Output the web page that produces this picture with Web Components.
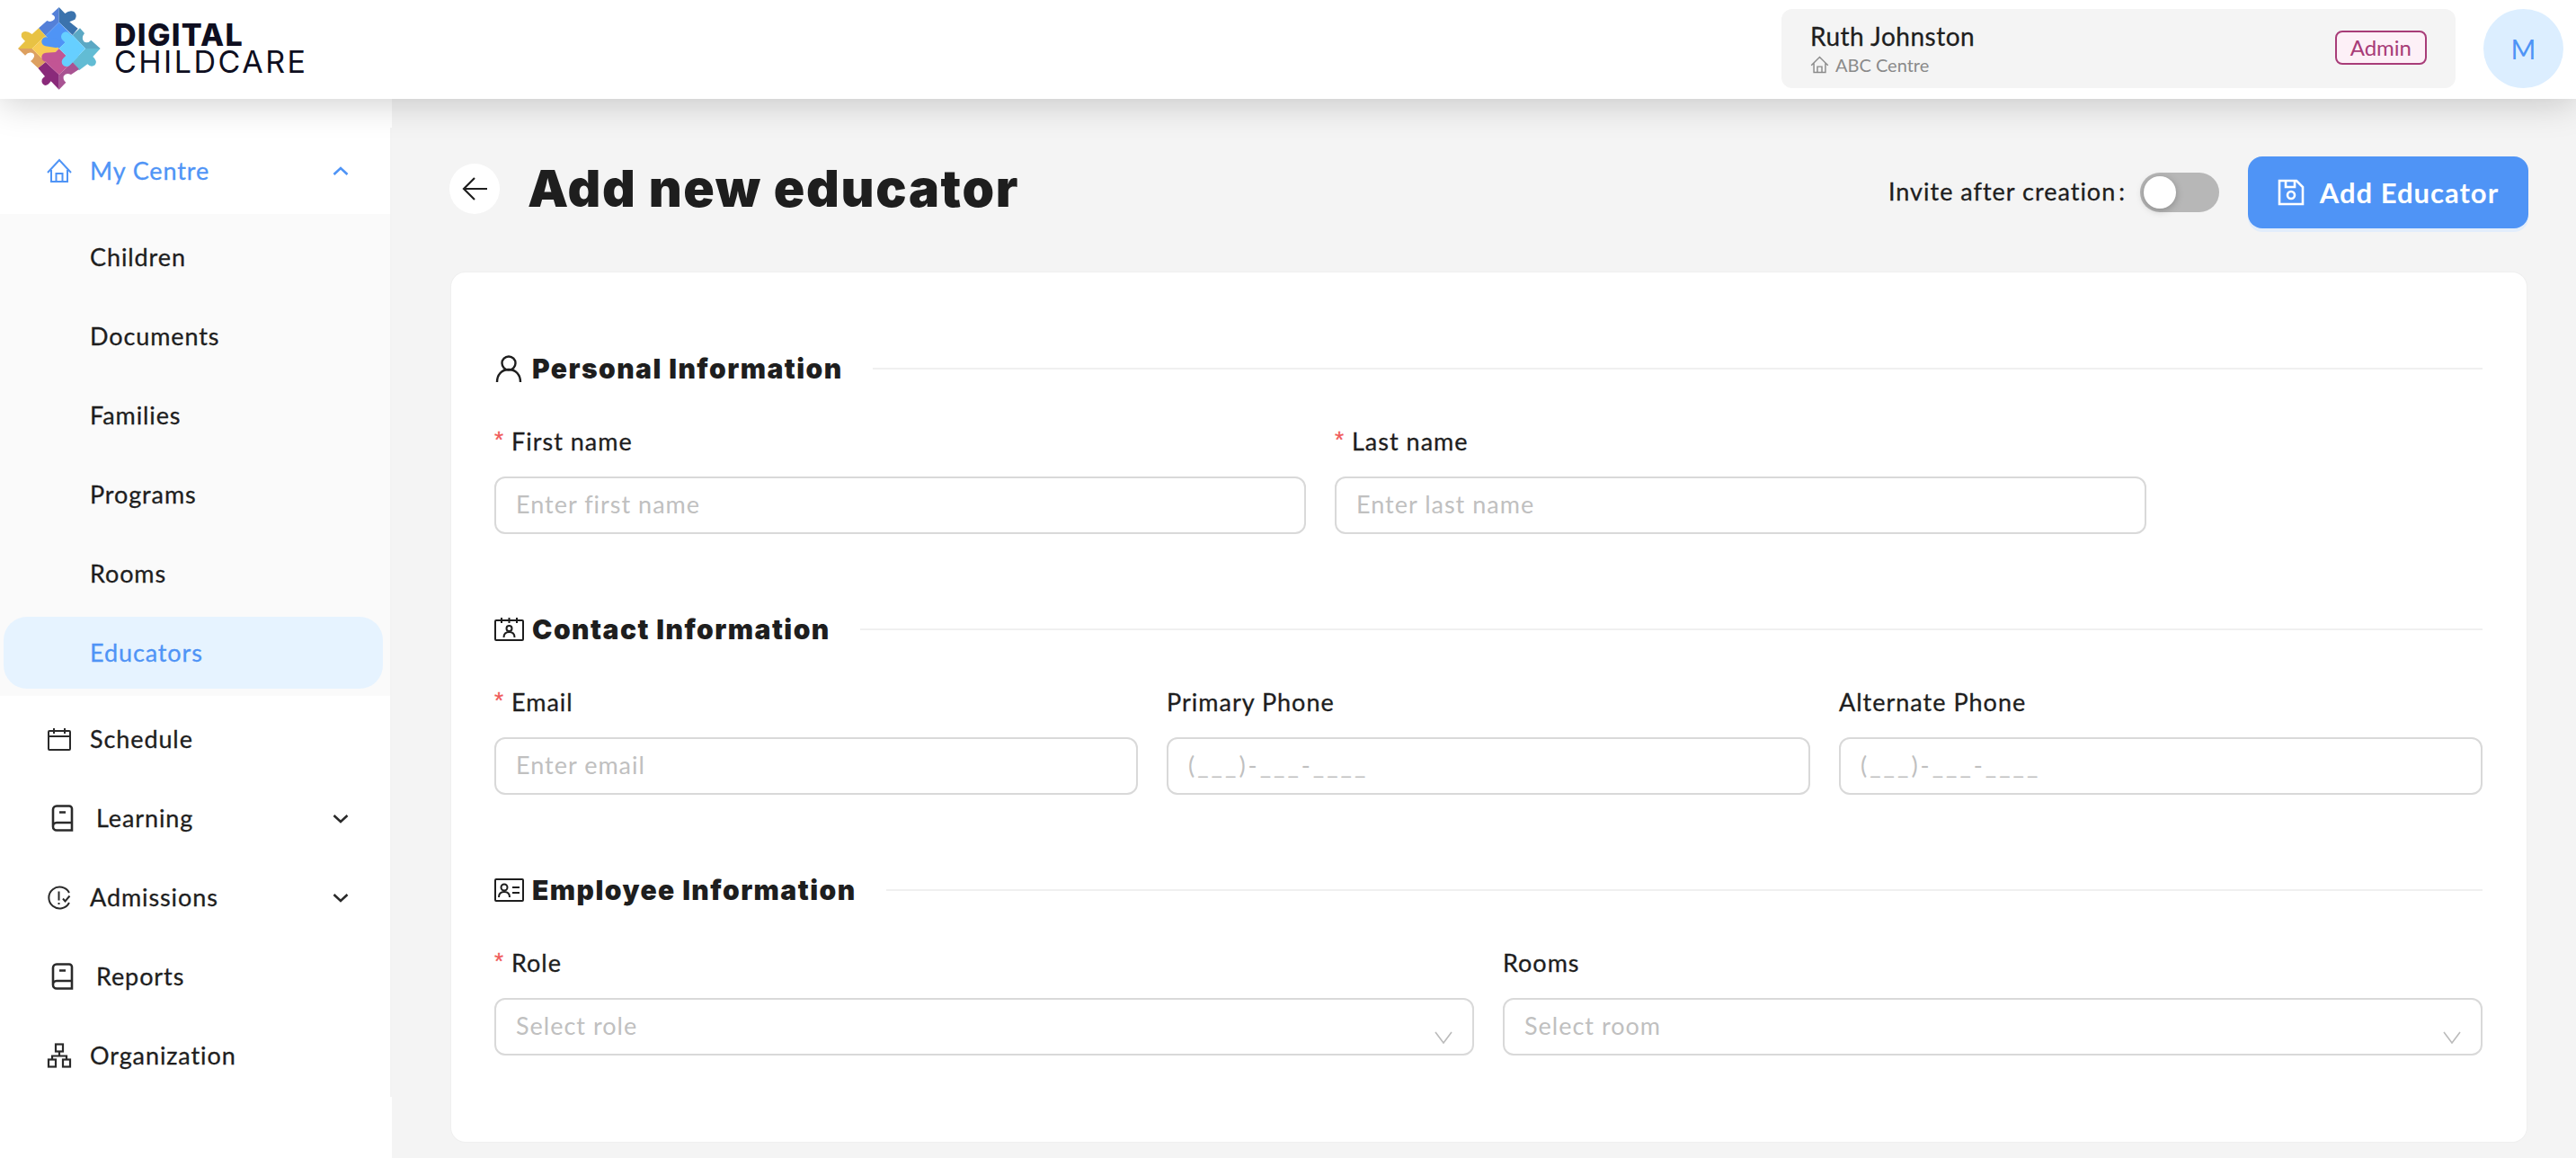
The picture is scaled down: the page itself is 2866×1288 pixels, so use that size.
<!DOCTYPE html>
<html lang="en">
<head>
<meta charset="utf-8">
<title>Add new educator</title>
<style>
    html, body{
        margin: 0;
        padding: 0;
        height: 1288px;
        overflow: hidden;
        background: #f4f4f4;
        color: #1e1e1e;
        font-family: Lato, "Liberation Sans", sans-serif;
    }
    .layout{
        display: flex;
        height: 1178px;
    }
</style>
</head>
<body>
<app-header></app-header>
<div class="layout">
    <side-nav>
        <nav-item label="My Centre" active chevron="up">
            <svg slot="icon" width="28" height="28" viewBox="0 0 28 28" fill="none" stroke="#4f94f6" stroke-width="2"><path d="M1 16 14 2l13 14M5 13v13h18V13M10.500 26v-9h7v9"/></svg>
        </nav-item>
        <nav-group>
            <nav-item label="Children" sub></nav-item>
            <nav-item label="Documents" sub></nav-item>
            <nav-item label="Families" sub></nav-item>
            <nav-item label="Programs" sub></nav-item>
            <nav-item label="Rooms" sub></nav-item>
            <nav-item label="Educators" sub selected></nav-item>
        </nav-group>
        <nav-item label="Schedule">
            <svg slot="icon" width="28" height="28" viewBox="0 0 28 28" fill="none" stroke="#2a2a2a" stroke-width="2"><rect x="2" y="5" width="24" height="21" rx="1"/><path d="M2 11h24M8 2v6M20 2v6"/></svg>
        </nav-item>
        <nav-item label="Learning" chevron="down">
            <svg slot="icon" width="35" height="30" viewBox="0 0 35 30" fill="none" stroke="#2a2a2a" stroke-width="2.600"><path d="M11 1.500h14a3 3 0 0 1 3 3v24H11a4 4 0 0 1-4-4v-19a4 4 0 0 1 4-4zM7 24a4 4 0 0 1 4-4h17M14 8.500h7"/></svg>
        </nav-item>
        <nav-item label="Admissions" chevron="down">
            <svg slot="icon" width="28" height="28" viewBox="0 0 28 28" fill="none" stroke="#2a2a2a" stroke-width="2"><path d="M25 9A12 12 0 1 0 25 20"/><path d="M13.500 7.500v10M13.500 20v2M18 15.500l2.500 3 5-6"/></svg>
        </nav-item>
        <nav-item label="Reports">
            <svg slot="icon" width="35" height="30" viewBox="0 0 35 30" fill="none" stroke="#2a2a2a" stroke-width="2.600"><path d="M11 1.500h14a3 3 0 0 1 3 3v24H11a4 4 0 0 1-4-4v-19a4 4 0 0 1 4-4zM7 24a4 4 0 0 1 4-4h17M14 8.500h7"/></svg>
        </nav-item>
        <nav-item label="Organization">
            <svg slot="icon" width="28" height="28" viewBox="0 0 28 28" fill="none" stroke="#2a2a2a" stroke-width="2.200"><rect x="10" y="1.500" width="8" height="8"/><rect x="2" y="18.500" width="8" height="8"/><rect x="18" y="18.500" width="8" height="8"/><path d="M14 9.500v5M6 18.500v-4h16v4"/></svg>
        </nav-item>
    </side-nav>
    <main-area>
        <page-head></page-head>
        <form-card>
            <form-section title="Personal Information">
                <svg slot="icon" width="33" height="30" viewBox="0 0 33 30" fill="none" stroke="#1e1e1e" stroke-width="2.400"><circle cx="16" cy="9" r="7.500"/><path d="M3 30c0-8 5-14 13-14s13 6 13 14"/></svg>
                <form-field span="10" label="First name" required placeholder="Enter first name"></form-field>
                <form-field span="10" label="Last name" required placeholder="Enter last name"></form-field>
            </form-section>
            <form-section title="Contact Information">
                <svg slot="icon" width="33" height="26" viewBox="0 0 33 26" fill="none" stroke="#1e1e1e" stroke-width="2"><rect x="1" y="3" width="31" height="22" rx="1"/><path d="M8 0v6M16.500 0v6M25 0v6"/><circle cx="16.500" cy="12" r="3"/><path d="M10.500 22c0-4 2.500-6 6-6s6 2 6 6"/></svg>
                <form-field span="8" label="Email" required placeholder="Enter email"></form-field>
                <form-field span="8" label="Primary Phone" placeholder="(___)-___-____" spaced></form-field>
                <form-field span="8" label="Alternate Phone" placeholder="(___)-___-____" spaced></form-field>
            </form-section>
            <form-section title="Employee Information">
                <svg slot="icon" width="33" height="26" viewBox="0 0 33 26" fill="none" stroke="#1e1e1e" stroke-width="2"><rect x="1" y="1" width="31" height="24" rx="1"/><circle cx="11" cy="10" r="3.500"/><path d="M5 21c0-4 2.500-6 6-6s6 2 6 6M20 10h8M20 16h8"/></svg>
                <form-field span="12" label="Role" required placeholder="Select role" select></form-field>
                <form-field span="12" label="Rooms" placeholder="Select room" select></form-field>
            </form-section>
        </form-card>
    </main-area>
</div>

<script>
const headerTemplate = document.createElement('template');

headerTemplate.innerHTML = `
    <style>
        :host{
            display: flex;
            justify-content: space-between;
            align-items: center;
            position: relative;
            z-index: 2;
            height: 110px;
            box-sizing: border-box;
            padding: 0 14px 2px 14px;
            background: #fff;
            box-shadow: 0 4px 40px rgba(0,0,0,.2);
        }
        .brand{
            display: flex;
            align-items: center;
            gap: 8px;
        }
        .wordmark{
            color: #0e0e20;
            font-family: Inter, sans-serif;
            line-height: 30px;
        }
        .wordmark b{
            display: block;
            font-size: 34px;
            font-weight: 800;
            letter-spacing: 1.300px;
        }
        .wordmark span{
            display: block;
            font-size: 34px;
            font-weight: 400;
            letter-spacing: 2.500px;
        }
        .right{
            display: flex;
            align-items: center;
            gap: 31px;
        }
        .user{
            display: flex;
            justify-content: space-between;
            align-items: center;
            width: 750px;
            height: 88px;
            box-sizing: border-box;
            padding: 0 32px;
            background: #f4f4f4;
            border-radius: 12px;
        }
        .who{
            margin-top: -2px;
        }
        .name{
            font-size: 28px;
            line-height: 34px;
            margin-bottom: 4px;
            letter-spacing: .5px;
            -webkit-text-stroke: .3px currentColor;
        }
        .centre{
            display: flex;
            align-items: center;
            gap: 7px;
            color: #8a8a8a;
            font-size: 20px;
            line-height: 22px;
        }
        .badge{
            display: flex;
            align-items: center;
            height: 38px;
            box-sizing: border-box;
            margin-top: -3px;
            padding: 0 15px;
            color: #a83c78;
            font-size: 24px;
            background: #fdf0f7;
            border: 2px solid #a83c78;
            border-radius: 8px;
        }
        .avatar{
            display: flex;
            justify-content: center;
            align-items: center;
            width: 89px;
            height: 88px;
            color: #4f94f6;
            font-size: 30px;
            background: #dceeff;
            border-radius: 50%;
        }
    </style>
    <div class="brand">
        <svg width="105" height="102" viewBox="0 0 315 306">
            <path fill="#5480d8" d="M155 15 155 65 110 110 87 85 115 60Q130 68 140 55 145 45 130 38Z"/>
            <path fill="#3b73ad" d="M155 15 175 36Q190 24 205 30 218 42 208 56L190 64 218 86 200 108 155 65Z"/>
            <path fill="#5ba8c4" d="M225 85 200 108 243 153 293 153 262 125Q250 138 238 130 228 118 240 102Z"/>
            <path fill="#62bcd4" d="M243 153 293 153 268 180Q285 195 275 208 262 218 250 205L222 226 200 198Z"/>
            <path fill="#a85392" d="M200 198 222 222 195 240Q178 232 170 245 168 258 178 266L155 290 155 240Z"/>
            <path fill="#8a2a7a" d="M155 240 155 290 128 262Q112 285 100 270 92 255 108 246L85 218 110 198Z"/>
            <path fill="#dda060" d="M65 153 18 153 42 176Q55 160 70 170 78 180 60 195L85 218 110 198Z"/>
            <path fill="#e8c244" d="M18 153 65 153 110 110 87 85 65 105Q45 90 32 100 22 112 42 128Z"/>
            <path fill="#f8cc55" d="M65 153 110 110 155 153 110 198Z"/>
            <path fill="#c25594" d="M110 198 155 153 200 198 155 240Z"/>
            <path fill="#4f94f6" d="M155 65 200 110 155 153 110 110Z"/>
            <path stroke="#4f94f6" stroke-width="30" stroke-linecap="round" d="M112 130 145 135"/>
            <path stroke="#c25594" stroke-width="30" stroke-linecap="round" d="M112 182 145 180"/>
            <path fill="#66cfff" d="M155 153 200 108 243 153 200 198Z"/>
            <path stroke="#66cfff" stroke-width="32" stroke-linecap="round" fill="none" d="M178 113 205 140M180 197 205 172"/>
        </svg>
        <div class="wordmark"><b>DIGITAL</b><span>CHILDCARE</span></div>
    </div>
    <div class="right">
        <div class="user">
            <div class="who">
                <div class="name">Ruth Johnston</div>
                <div class="centre">
                    <svg width="21" height="20" viewBox="0 0 28 28" fill="none" stroke="#8a8a8a" stroke-width="2"><path d="M1 15 14 2l13 13M5 12v14h18V12M10.500 26v-9h7v9"/></svg>
                    ABC Centre
                </div>
            </div>
            <div class="badge">Admin</div>
        </div>
        <div class="avatar">M</div>
    </div>
`;

class AppHeader extends HTMLElement{
    constructor() {
        super();

        this.attachShadow({ mode: 'open' });
        this.shadowRoot.appendChild(headerTemplate.content.cloneNode(true));
    }
}

const sideNavTemplate = document.createElement('template');

sideNavTemplate.innerHTML = `
    <style>
        :host{
            display: block;
            flex: 0 0 436px;
            box-sizing: border-box;
            padding-top: 32px;
            background: #fff;
        }
        .column{
            height: 1078px;
            box-sizing: border-box;
            padding-top: 4px;
            border-right: 2px solid #f3f3f3;
        }
    </style>
    <div class="column"><slot></slot></div>
`;

class SideNav extends HTMLElement{
    constructor() {
        super();

        this.attachShadow({ mode: 'open' });
        this.shadowRoot.appendChild(sideNavTemplate.content.cloneNode(true));
    }
}

const navGroupTemplate = document.createElement('template');

navGroupTemplate.innerHTML = `
    <style>
        :host{
            display: block;
            margin: 4px 0;
            padding: 4px 0;
            background: #fafafa;
        }
    </style>
    <slot></slot>
`;

class NavGroup extends HTMLElement{
    constructor() {
        super();

        this.attachShadow({ mode: 'open' });
        this.shadowRoot.appendChild(navGroupTemplate.content.cloneNode(true));
    }
}

const navItemTemplate = document.createElement('template');

navItemTemplate.innerHTML = `
    <style>
        :host{
            display: block;
            height: 88px;
            box-sizing: border-box;
        }
        .row{
            display: flex;
            align-items: center;
            gap: 20px;
            height: 100%;
            box-sizing: border-box;
            padding: 0 46px 0 52px;
            font-size: 27px;
            letter-spacing: .9px;
            -webkit-text-stroke: .3px currentColor;
        }
        .label{
            margin-top: -2px;
        }
        :host([active]) .row{
            color: #4f94f6;
        }
        :host([sub]) .row{
            padding-left: 100px;
        }
        :host([selected]){
            padding: 4px 8px 4px 4px;
        }
        :host([selected]) .row{
            padding-left: 96px;
            color: #4f94f6;
            background: #e6f3ff;
            border-radius: 26px;
        }
        svg.chev{
            margin-left: auto;
        }
        ::slotted(svg){
            display: block;
        }
    </style>
    <div class="row">
        <slot name="icon"></slot>
        <span class="label"></span>
    </div>
`;

class NavItem extends HTMLElement{
    constructor() {
        super();

        this.attachShadow({ mode: 'open' });
        this.shadowRoot.appendChild(navItemTemplate.content.cloneNode(true));
        this.shadowRoot.querySelector('.label').textContent = this.getAttribute('label');

        const chevron = this.getAttribute('chevron');
        if (chevron) {
            const color = chevron === 'up' ? '#4f94f6' : '#2a2a2a';
            const d = chevron === 'up' ? 'M1.500 9 9 2l7.500 7' : 'M1.500 2 9 9l7.500-7';
            this.shadowRoot.querySelector('.row').insertAdjacentHTML('beforeend',
                `<svg class="chev" width="18" height="11" viewBox="0 0 18 11" fill="none" stroke="${color}" stroke-width="2.600"><path d="${d}"/></svg>`);
        }
    }
}

const mainTemplate = document.createElement('template');

mainTemplate.innerHTML = `
    <style>
        :host{
            display: block;
            flex: 1;
            box-sizing: border-box;
            padding: 64px 53px 0 64px;
        }
    </style>
    <slot></slot>
`;

class MainArea extends HTMLElement{
    constructor() {
        super();

        this.attachShadow({ mode: 'open' });
        this.shadowRoot.appendChild(mainTemplate.content.cloneNode(true));
    }
}

const pageHeadTemplate = document.createElement('template');

pageHeadTemplate.innerHTML = `
    <style>
        :host{
            display: flex;
            justify-content: space-between;
            align-items: center;
            height: 80px;
            margin-bottom: 49px;
        }
        .left{
            display: flex;
            align-items: center;
            gap: 31px;
            margin-top: -8px;
        }
        .back{
            display: flex;
            justify-content: center;
            align-items: center;
            width: 56px;
            height: 56px;
            background: #fff;
            border-radius: 50%;
        }
        h1{
            margin: 0;
            font-family: Inter, sans-serif;
            font-size: 57px;
            font-weight: 900;
            letter-spacing: 1.700px;
            line-height: 70px;
        }
        .right{
            display: flex;
            align-items: center;
        }
        .invite{
            margin: -3px 16px 0 0;
            font-size: 27px;
            letter-spacing: 1px;
            -webkit-text-stroke: .3px currentColor;
        }
        .colon{
            margin-left: 3px;
        }
        .toggle{
            position: relative;
            width: 88px;
            height: 44px;
            margin-right: 32px;
            background: #b7b7b7;
            border-radius: 22px;
        }
        .knob{
            position: absolute;
            top: 4px;
            left: 4px;
            width: 36px;
            height: 36px;
            background: #fff;
            border-radius: 50%;
            box-shadow: 0 2px 8px rgba(0,0,0,.25);
        }
        .add{
            display: flex;
            justify-content: center;
            align-items: center;
            gap: 17px;
            width: 312px;
            height: 80px;
            color: #fff;
            font-size: 31px;
            font-weight: 700;
            letter-spacing: 1px;
            background: #4f94f6;
            border-radius: 16px;
            box-shadow: 0 4px 0 #e2edfb;
        }
    </style>
    <div class="left">
        <div class="back">
            <svg width="28" height="26" viewBox="0 0 28 26" fill="none" stroke="#1e1e1e" stroke-width="2.200"><path d="M14 1 2 13l12 12M2 13h26"/></svg>
        </div>
        <h1>Add new educator</h1>
    </div>
    <div class="right">
        <span class="invite">Invite after creation<span class="colon">:</span></span>
        <div class="toggle"><div class="knob"></div></div>
        <div class="add">
            <svg width="30" height="30" viewBox="0 0 30 30" fill="none" stroke="#fff" stroke-width="2.600"><path d="M2 2h19l7 7v19H2zM9 2v7h10V2"/><circle cx="15" cy="18" r="4"/></svg>
            Add Educator
        </div>
    </div>
`;

class PageHead extends HTMLElement{
    constructor() {
        super();

        this.attachShadow({ mode: 'open' });
        this.shadowRoot.appendChild(pageHeadTemplate.content.cloneNode(true));
    }
}

const formCardTemplate = document.createElement('template');

formCardTemplate.innerHTML = `
    <style>
        :host{
            display: block;
            height: 967px;
            box-sizing: border-box;
            margin: 0 2px;
            padding: 85px 49px 0 48px;
            background: #fff;
            border-radius: 16px;
            box-shadow: 0 0 0 1px #efefef;
        }
    </style>
    <slot></slot>
`;

class FormCard extends HTMLElement{
    constructor() {
        super();

        this.attachShadow({ mode: 'open' });
        this.shadowRoot.appendChild(formCardTemplate.content.cloneNode(true));
    }
}

const formSectionTemplate = document.createElement('template');

formSectionTemplate.innerHTML = `
    <style>
        :host{
            display: block;
            margin-bottom: 84px;
        }
        .title{
            display: flex;
            align-items: center;
            height: 44px;
            margin-bottom: 41px;
        }
        .title ::slotted(svg){
            display: block;
        }
        .icon{
            display: flex;
            width: 42px;
        }
        h2{
            margin: 0 33px 0 0;
            font-family: Inter, sans-serif;
            font-size: 30px;
            font-weight: 900;
            letter-spacing: 1.450px;
            white-space: nowrap;
        }
        .line{
            flex: 1;
            height: 2px;
            background: #f0f0f0;
        }
        .fields{
            display: grid;
            grid-template-columns: repeat(24, 1fr);
            margin: 0 -16px;
        }
    </style>
    <div class="title">
        <span class="icon"><slot name="icon"></slot></span>
        <h2></h2>
        <div class="line"></div>
    </div>
    <div class="fields"><slot></slot></div>
`;

class FormSection extends HTMLElement{
    constructor() {
        super();

        this.attachShadow({ mode: 'open' });
        this.shadowRoot.appendChild(formSectionTemplate.content.cloneNode(true));
        this.shadowRoot.querySelector('h2').textContent = this.getAttribute('title');
    }
}

const formFieldTemplate = document.createElement('template');

formFieldTemplate.innerHTML = `
    <style>
        :host{
            display: block;
            min-width: 0;
            padding: 0 16px;
        }
        label{
            display: flex;
            align-items: center;
            height: 36px;
            margin-bottom: 21px;
            padding-bottom: 2px;
            box-sizing: border-box;
            font-size: 27px;
            letter-spacing: 1px;
            -webkit-text-stroke: .3px currentColor;
        }
        .star{
            width: 19px;
            margin-top: -2px;
            color: #f05a5a;
            font-family: "Liberation Sans", sans-serif;
            font-size: 26px;
        }
        .box{
            position: relative;
            height: 64px;
            box-sizing: border-box;
            border: 2px solid #d9d9d9;
            border-radius: 12px;
        }
        input{
            display: block;
            width: 100%;
            height: 100%;
            box-sizing: border-box;
            padding: 0 22px 3px;
            font: inherit;
            font-size: 27px;
            letter-spacing: 1px;
            border: 0;
            outline: 0;
            background: transparent;
        }
        :host([spaced]) input{
            letter-spacing: 3px;
        }
        input::placeholder{
            color: #c0c0c0;
            opacity: 1;
        }
        .arrow{
            position: absolute;
            top: 35px;
            right: 22px;
        }
    </style>
    <label></label>
    <div class="box"><input type="text"></div>
`;

class FormField extends HTMLElement{
    constructor() {
        super();

        this.attachShadow({ mode: 'open' });
        this.shadowRoot.appendChild(formFieldTemplate.content.cloneNode(true));
        this.style.gridColumn = `span ${this.getAttribute('span')}`;

        const label = this.shadowRoot.querySelector('label');
        if (this.hasAttribute('required')) {
            label.innerHTML = '<span class="star">*</span>';
        }
        label.append(this.getAttribute('label'));
        this.shadowRoot.querySelector('input').placeholder = this.getAttribute('placeholder');

        if (this.hasAttribute('select')) {
            this.shadowRoot.querySelector('.box').insertAdjacentHTML('beforeend',
                '<svg class="arrow" width="20" height="14" viewBox="0 0 20 14" fill="none" stroke="#bbb" stroke-width="1.600"><path d="M1 1 10 13 19 1"/></svg>');
        }
    }
}

window.customElements.define('app-header', AppHeader);
window.customElements.define('side-nav', SideNav);
window.customElements.define('nav-group', NavGroup);
window.customElements.define('nav-item', NavItem);
window.customElements.define('main-area', MainArea);
window.customElements.define('page-head', PageHead);
window.customElements.define('form-card', FormCard);
window.customElements.define('form-section', FormSection);
window.customElements.define('form-field', FormField);
</script>
</body>
</html>
